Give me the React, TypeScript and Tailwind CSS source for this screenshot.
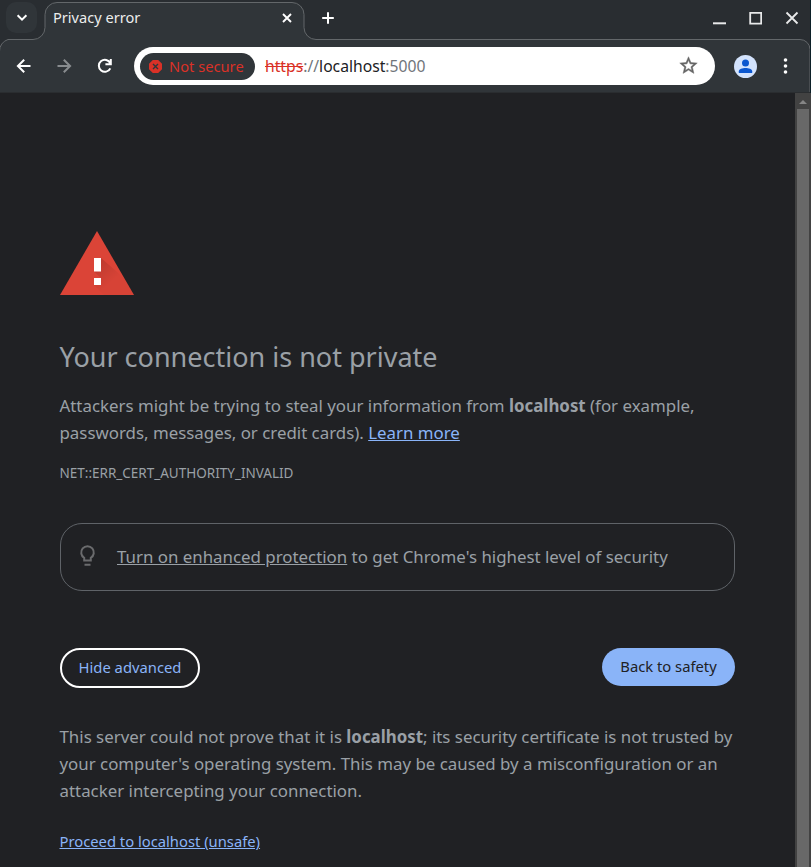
import React from "react";

function TabOutline() {
  return (
    <svg className="absolute left-0 top-0" width="811" height="93" viewBox="0 0 811 93" fill="none" aria-hidden="true">
      <path
        d="M-0.5 98V51.5A12 12 0 0 1 8 39.5H33A12 12 0 0 0 45 27.5V14.5A12 12 0 0 1 57 2.5H292A12 12 0 0 1 304 14.5V27.5A12 12 0 0 0 316 39.5H800A10 10 0 0 1 810 49.5V98Z"
        fill="#303539"
        stroke="#63676a"
      />
      <path d="M0 92H810V93H0Z" fill="#2a2d30" />
      <path d="M809.5 0H811V94H810V0Z" fill="#0c2028" />
    </svg>
  );
}

function TabStrip() {
  return (
    <div className="relative flex h-[39px] items-start text-white">
      <button className="ml-[6px] mt-[2px] flex h-[31px] w-[31px] items-center justify-center rounded-[10px] bg-[#303539]">
        <svg width="12" height="12" viewBox="0 0 12 12" fill="none" stroke="currentColor" strokeWidth="2">
          <path d="M1.6 3.2 6 7.6 10.4 3.2" />
        </svg>
      </button>
      <div className="ml-[16px] flex h-[36px] w-[251px] items-center">
        <span className="mb-[2px] w-[228px] text-[14.6px] leading-5 text-[#eceded]">Privacy error</span>
        <svg width="12" height="12" viewBox="0 0 12 12" stroke="currentColor" strokeWidth="1.9">
          <path d="M2 2 10 10M10 2 2 10" />
        </svg>
      </div>
      <div className="ml-[17px] flex h-[36px] items-center">
        <svg width="14" height="14" viewBox="0 0 14 14" stroke="currentColor" strokeWidth="2">
          <path d="M7 1.2V12.8M1.2 7H12.8" />
        </svg>
      </div>
      <div className="ml-auto mr-[12px] flex h-[36px] items-center gap-[23px] text-[#e8e9ea]">
        <svg width="13" height="14" viewBox="0 0 13 14" stroke="currentColor" strokeWidth="2">
          <path d="M0 12.3H13" />
        </svg>
        <svg width="13" height="14" viewBox="0 0 13 14" fill="none" stroke="currentColor" strokeWidth="1.8">
          <path d="M1.2 1.8H12.2V12.6H1.2Z" />
        </svg>
        <svg width="14" height="14" viewBox="0 0 14 14" stroke="currentColor" strokeWidth="1.8">
          <path d="M1.5 1.5 12.5 12.5M12.5 1.5 1.5 12.5" />
        </svg>
      </div>
    </div>
  );
}

function Toolbar() {
  return (
    <div className="relative flex h-[54px] items-center text-white">
      <svg className="ml-[12px]" width="24" height="24" viewBox="0 0 24 24" fill="none" stroke="currentColor" strokeWidth="2">
        <path d="M18.5 12H6.5M12.2 5.7 5.9 12 12.2 18.3" />
      </svg>
      <svg className="ml-[16px] text-[#888c8f]" width="24" height="24" viewBox="0 0 24 24" fill="none" stroke="currentColor" strokeWidth="2">
        <path d="M5.5 12H17.5M11.8 5.7 18.1 12 11.8 18.3" />
      </svg>
      <svg className="ml-[17px]" width="24" height="24" viewBox="0 0 24 24" fill="none" stroke="currentColor" strokeWidth="2">
        <path d="M17.3 9.3A6 6 0 1 0 17.3 14.3M17.8 5V10.2H12.4" />
      </svg>
      <div className="ml-[17px] flex h-[38px] w-[581px] items-center rounded-full bg-white">
        <div className="ml-[6px] flex h-[27px] w-[115px] items-center rounded-full bg-[#303539] pl-[9px] text-[14.7px] text-[#da3127]">
          <svg width="13" height="13" viewBox="0 0 13 13">
            <path d="M3.8 0H9.2L13 3.8V9.2L9.2 13H3.8L0 9.2V3.8Z" fill="#da3127" />
            <path d="M4 4 9 9M9 4 4 9" stroke="#303539" strokeWidth="1.4" />
          </svg>
          <span className="ml-[7px] whitespace-nowrap">Not secure</span>
        </div>
        <div className="ml-[10px] whitespace-nowrap pt-[2px] text-[15.7px] text-[#70757a]">
          <span className="text-[#d93025] line-through">https</span>://<span className="text-[#202124]">localhost</span>:5000
        </div>
        <svg className="mb-px ml-auto mr-[16px]" width="21" height="21" viewBox="0 0 24 24" fill="#646464" stroke="#646464" strokeWidth=".5">
          <path d="M22 9.24l-7.19-.62L12 2 9.19 8.63 2 9.24l5.46 4.73L5.82 21 12 17.27 18.18 21l-1.63-7.03L22 9.24zM12 15.4l-3.76 2.27 1-4.28-3.32-2.88 4.38-.38L12 6.1l1.71 4.04 4.38.38-3.32 2.88 1 4.28L12 15.4z" />
        </svg>
      </div>
      <svg className="ml-[19px]" width="23" height="23" viewBox="0 0 23 23">
        <circle cx="11.5" cy="11.5" r="11.5" fill="#d3e3fd" />
        <circle cx="11.5" cy="8" r="3.5" fill="#0b57d0" />
        <path d="M4.8 18V16.2C4.8 13.9 8.5 13 11.5 13S18.2 13.9 18.2 16.2V18Z" fill="#0b57d0" />
      </svg>
      <svg className="ml-[26px]" width="5" height="18" viewBox="0 0 5 18" fill="currentColor">
        <circle cx="2.5" cy="3" r="1.8" />
        <circle cx="2.5" cy="9" r="1.8" />
        <circle cx="2.5" cy="15" r="1.8" />
      </svg>
    </div>
  );
}

function WarningIcon() {
  return (
    <svg width="74" height="64" viewBox="0 0 74 64">
      <defs>
        <linearGradient id="shade" x1="36" y1="32" x2="52" y2="50" gradientUnits="userSpaceOnUse">
          <stop stopColor="#000" stopOpacity=".14" />
          <stop offset="1" stopColor="#000" stopOpacity=".02" />
        </linearGradient>
      </defs>
      <path d="M37 0 74 64H0Z" fill="#db4437" />
      <path d="M41 27 64 47 74 64H44L34 54 41 47 34 40.5Z" fill="url(#shade)" />
      <path d="M34 27H41V40.5H34ZM34 47H41V54H34Z" fill="#fff" />
    </svg>
  );
}

function Scrollbar() {
  return (
    <div className="flex w-[16px] shrink-0 flex-col items-center bg-[#424242]">
      <div className="flex h-[16px] items-center">
        <svg className="mt-px" width="8" height="4" viewBox="0 0 8 4" fill="#858585"><path d="M4 0 8 4H0Z" /></svg>
      </div>
      <div className="w-[12px] flex-1 bg-[#686868]" />
    </div>
  );
}

export default function App() {
  return (
    <div className="flex h-[867px] w-[811px] flex-col overflow-hidden bg-[#202124] font-['Noto_Sans',sans-serif]">
      <header className="relative h-[93px] shrink-0 bg-[#292d31]">
        <TabOutline />
        <TabStrip />
        <Toolbar />
      </header>
      <div className="flex min-h-0 flex-1">
        <main className="w-[795px] pl-[59.5px] pt-[138px] text-[16.875px] leading-[27px] text-[#9aa0a6]">
          <div className="h-[64px] pl-[0.5px]"><WarningIcon /></div>
          <h1 className="mt-[45px] h-[34px] text-[27px] leading-[34px]">Your connection is not private</h1>
          <p className="mt-[18px] whitespace-nowrap">
            Attackers might be trying to steal your information from <b>localhost</b> (for example,<br />
            passwords, messages, or credit cards). <a className="text-[#8ab4f8] underline">Learn more</a>
          </p>
          <div className="mt-[16px] h-[22px] text-[13.5px] leading-[22px]">NET::ERR_CERT_AUTHORITY_INVALID</div>
          <div className="ml-[0.5px] mt-[39px] flex h-[68px] w-[675px] items-center rounded-[22px] border border-[#5f6368] pb-[2px] pl-[18px]">
            <svg width="18" height="22" viewBox="0 0 18 22" fill="none" stroke="#6a6b6d" strokeWidth="2">
              <path d="M5.2 15.6V12.9A6.3 6.3 0 1 1 11.8 12.9V15.6ZM5.5 19.7H11.5" />
            </svg>
            <span className="ml-[20px] whitespace-nowrap"><a className="underline">Turn on enhanced protection</a> to get Chrome's highest level of security</span>
          </div>
          <div className="ml-[0.5px] mt-[57px] flex w-[675px] items-start justify-between text-[14.77px] leading-[20px]">
            <button className="h-[40px] w-[140px] rounded-full border-2 border-white pb-[2px] text-[#8ab4f8]">Hide advanced</button>
            <button className="h-[38px] w-[133px] rounded-full bg-[#8ab4f8] pb-[2px] text-[#202124]">Back to safety</button>
          </div>
          <p className="mt-[35px] whitespace-nowrap">
            This server could not prove that it is <b>localhost</b>; its security certificate is not trusted by<br />
            your computer's operating system. This may be caused by a misconfiguration or an<br />
            attacker intercepting your connection.
          </p>
          <a className="mt-[25px] block text-[14.77px] leading-[24px] text-[#8ab4f8] underline">Proceed to localhost (unsafe)</a>
        </main>
        <Scrollbar />
      </div>
    </div>
  );
}
